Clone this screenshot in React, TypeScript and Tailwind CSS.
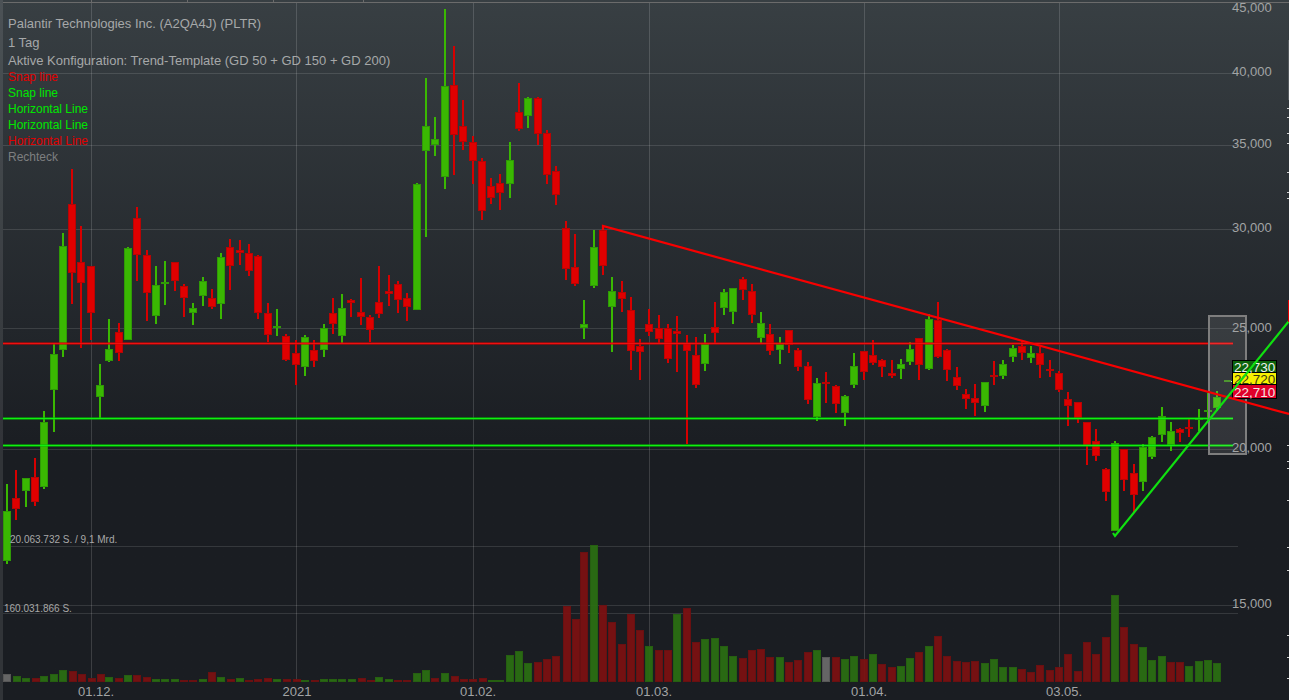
// [x, wickTop, bodyTop, bodyBottom, wickBottom, up]
type Candle = [number, number, number, number, number, number];

const candles: Candle[] = [
  [7, 484, 511, 561, 564, 1], [16, 470, 498, 509, 520, 0], [26, 478, 478, 491, 507, 1], [35, 458, 477, 502, 506, 0],
  [44, 411, 422, 487, 489, 1], [54, 344, 354, 390, 432, 1], [63, 233, 246, 350, 357, 1], [72, 169, 204, 273, 304, 0],
  [81, 226, 262, 283, 348, 0], [91, 266, 266, 313, 340, 0], [100, 364, 385, 397, 418, 1], [109, 319, 349, 361, 362, 1],
  [119, 323, 332, 353, 361, 0], [128, 247, 248, 340, 340, 1], [137, 207, 218, 255, 281, 0], [147, 250, 255, 293, 321, 0],
  [156, 266, 285, 316, 324, 1], [165, 261, 282, 284, 305, 1], [175, 262, 262, 281, 291, 0], [184, 284, 286, 298, 317, 0],
  [193, 303, 308, 313, 325, 1], [203, 277, 281, 296, 306, 1], [212, 289, 298, 307, 309, 0], [221, 253, 257, 304, 319, 1],
  [230, 239, 247, 266, 290, 0], [240, 240, 250, 253, 265, 0], [249, 244, 253, 271, 276, 0], [258, 255, 256, 313, 319, 0],
  [268, 303, 313, 335, 342, 0], [277, 309, 326, 328, 336, 1], [286, 334, 336, 360, 361, 0], [296, 340, 353, 365, 385, 0],
  [305, 335, 337, 367, 376, 1], [314, 340, 350, 361, 367, 0], [324, 324, 328, 350, 357, 1], [333, 298, 313, 324, 334, 0],
  [342, 294, 308, 336, 343, 1], [351, 299, 300, 303, 317, 0], [361, 278, 312, 317, 325, 0], [370, 315, 317, 330, 342, 0],
  [379, 266, 302, 314, 318, 0], [389, 275, 291, 294, 306, 0], [398, 281, 284, 300, 313, 0], [407, 293, 298, 307, 321, 0],
  [417, 183, 184, 310, 310, 1], [426, 78, 126, 151, 237, 1], [435, 117, 139, 145, 156, 1], [445, 9, 86, 177, 189, 1],
  [454, 46, 85, 135, 175, 0], [463, 100, 126, 142, 150, 0], [473, 136, 142, 161, 184, 0], [482, 158, 161, 211, 220, 0],
  [491, 178, 186, 198, 204, 0], [500, 174, 183, 193, 210, 0], [510, 142, 160, 184, 198, 1], [519, 83, 112, 129, 131, 0],
  [528, 97, 98, 116, 128, 1], [538, 97, 98, 134, 145, 0], [547, 130, 133, 175, 184, 0], [556, 166, 171, 195, 205, 0],
  [566, 221, 228, 269, 280, 0], [575, 234, 267, 284, 286, 0], [584, 300, 324, 328, 339, 1], [594, 230, 247, 286, 288, 1],
  [603, 225, 230, 266, 275, 0], [612, 277, 291, 307, 352, 1], [622, 281, 292, 299, 312, 0], [631, 297, 310, 351, 370, 0],
  [640, 339, 346, 352, 380, 0], [649, 309, 324, 332, 336, 0], [659, 315, 328, 339, 343, 0], [668, 324, 328, 359, 363, 0],
  [677, 316, 331, 334, 372, 0], [687, 335, 343, 351, 444, 0], [696, 337, 355, 385, 388, 0], [705, 334, 344, 364, 371, 1],
  [715, 302, 327, 333, 344, 0], [724, 289, 292, 308, 315, 1], [733, 288, 288, 312, 324, 1], [743, 277, 279, 290, 300, 0],
  [752, 284, 291, 315, 323, 0], [761, 312, 323, 338, 343, 1], [770, 324, 334, 351, 355, 0], [780, 337, 344, 350, 364, 1],
  [789, 330, 330, 345, 353, 0], [798, 348, 350, 367, 371, 0], [808, 362, 366, 400, 404, 0], [817, 378, 383, 417, 421, 1],
  [826, 372, 382, 384, 403, 0], [836, 385, 386, 404, 413, 0], [845, 395, 396, 413, 426, 1], [854, 353, 366, 385, 388, 1],
  [864, 351, 351, 372, 380, 0], [873, 340, 355, 363, 365, 0], [882, 359, 360, 367, 377, 0], [892, 360, 373, 376, 378, 0],
  [901, 359, 364, 369, 379, 1], [910, 342, 349, 362, 365, 1], [919, 338, 338, 365, 380, 0], [929, 314, 319, 369, 370, 1],
  [938, 302, 320, 357, 358, 0], [947, 349, 350, 370, 381, 0], [957, 367, 377, 386, 390, 0], [966, 389, 394, 399, 409, 0],
  [975, 384, 398, 403, 416, 0], [985, 382, 382, 406, 412, 1], [994, 361, 375, 377, 385, 0], [1003, 360, 364, 376, 379, 1],
  [1013, 345, 348, 357, 362, 1], [1022, 341, 346, 353, 360, 0], [1031, 346, 353, 358, 363, 1], [1040, 347, 353, 365, 378, 0],
  [1050, 360, 369, 371, 377, 0], [1059, 371, 373, 390, 392, 0], [1068, 392, 399, 406, 426, 0], [1078, 402, 402, 418, 423, 0],
  [1087, 422, 422, 446, 465, 0], [1096, 429, 441, 456, 461, 0], [1106, 468, 469, 492, 501, 0], [1115, 441, 443, 531, 531, 1],
  [1124, 449, 449, 480, 491, 0], [1134, 464, 473, 495, 512, 0], [1143, 444, 447, 482, 491, 1], [1152, 436, 437, 457, 459, 1],
  [1162, 407, 416, 435, 442, 1], [1171, 422, 431, 445, 451, 1], [1180, 428, 429, 433, 442, 0], [1189, 419, 427, 429, 437, 0],
  [1199, 409, 418, 420, 431, 1], [1208, 393, 410, 412, 420, 1], [1217, 391, 397, 408, 411, 1],
];

// [x, top, colour] - baseline is y=681
const volumes: [number, number, string][] = [
  [7, 674, "n"], [17, 676, "g"], [26, 678, "g"], [36, 678, "r"], [44, 676, "g"], [54, 674, "g"], [63, 670, "g"], [73, 671, "r"],
  [82, 674, "r"], [92, 678, "r"], [101, 674, "r"], [109, 677, "g"], [119, 678, "r"], [128, 675, "g"], [137, 675, "r"], [147, 677, "r"],
  [156, 679, "g"], [165, 679, "g"], [175, 679, "g"], [184, 680, "r"], [193, 680, "r"], [203, 679, "g"], [212, 672, "r"], [221, 677, "g"],
  [231, 679, "r"], [240, 678, "g"], [249, 680, "r"], [258, 679, "r"], [268, 678, "r"], [277, 679, "g"], [287, 679, "r"], [297, 679, "r"],
  [305, 680, "g"], [315, 680, "r"], [324, 679, "g"], [333, 679, "g"], [342, 679, "g"], [352, 679, "g"], [362, 678, "r"], [371, 680, "r"],
  [379, 677, "g"], [389, 679, "g"], [398, 680, "r"], [407, 680, "r"], [417, 673, "g"], [426, 670, "g"], [435, 678, "r"], [445, 673, "g"],
  [455, 676, "r"], [464, 679, "r"], [473, 679, "r"], [483, 678, "r"], [492, 680, "g"], [500, 680, "g"], [510, 655, "g"], [519, 651, "g"],
  [528, 663, "g"], [538, 662, "r"], [547, 659, "r"], [556, 656, "r"], [567, 606, "r"], [576, 619, "r"], [584, 552, "r"], [594, 545, "g"],
  [603, 605, "r"], [612, 622, "r"], [622, 644, "r"], [631, 614, "r"], [640, 630, "r"], [649, 646, "g"], [659, 650, "r"], [668, 650, "r"],
  [677, 614, "g"], [687, 608, "r"], [696, 642, "r"], [705, 639, "g"], [715, 638, "g"], [724, 646, "g"], [733, 656, "g"], [743, 658, "r"],
  [752, 650, "r"], [761, 649, "r"], [770, 657, "r"], [780, 657, "g"], [789, 662, "r"], [798, 660, "r"], [808, 652, "r"], [817, 650, "g"],
  [826, 657, "n"], [836, 657, "r"], [845, 659, "g"], [854, 656, "g"], [864, 659, "r"], [873, 654, "g"], [882, 664, "r"], [892, 667, "r"],
  [901, 666, "g"], [910, 658, "g"], [919, 652, "r"], [929, 646, "g"], [938, 636, "r"], [947, 656, "r"], [957, 661, "r"], [966, 662, "r"],
  [975, 661, "r"], [985, 663, "g"], [994, 659, "g"], [1003, 667, "g"], [1013, 667, "g"], [1022, 669, "r"], [1031, 672, "r"], [1040, 665, "r"],
  [1050, 670, "r"], [1059, 667, "r"], [1068, 654, "r"], [1078, 671, "r"], [1087, 642, "r"], [1096, 654, "r"], [1106, 637, "r"], [1115, 595, "g"],
  [1124, 627, "r"], [1134, 644, "r"], [1143, 647, "g"], [1152, 660, "g"], [1162, 656, "g"], [1171, 662, "r"], [1180, 662, "r"], [1189, 666, "g"],
  [1199, 661, "g"], [1208, 660, "g"], [1217, 663, "g"],
];

const gridY = [73, 145, 229, 328, 449, 546, 605, 613];
const gridX = [91, 296, 473, 649, 864, 1059];
const priceLabels: [string, number][] = [
  ["45,000", 7], ["40,000", 71], ["35,000", 143], ["30,000", 227], ["25,000", 327], ["20,000", 447], ["15,000", 603],
];
const dateLabels: [string, number][] = [
  ["01.12.", 96], ["2021", 297], ["01.02.", 478], ["01.03.", 654], ["01.04.", 869], ["03.05.", 1064],
];
const rightTicks = [108, 117, 133, 143, 172, 192, 198, 445, 461, 468, 500, 547, 570, 635, 657, 678];

const volFill: Record<string, string> = { g: "#2b6f12", r: "#7c1111", n: "#6b6b6b" };
const volStroke: Record<string, string> = { g: "#276510", r: "#6f1010", n: "#5c5c5c" };

const legend = [
  { label: "Palantir Technologies Inc. (A2QA4J) (PLTR)", cls: "h-[19px] text-[13px] text-[#a6a8a9]" },
  { label: "1 Tag", cls: "h-[19px] text-[13px] text-[#a6a8a9]" },
  { label: "Aktive Konfiguration: Trend-Template (GD 50 + GD 150 + GD 200)", cls: "h-[17px] text-[13px] text-[#a6a8a9]" },
  { label: "Snap line", cls: "h-4 text-xs text-[#e00000]" },
  { label: "Snap line", cls: "h-4 text-xs text-[#00e600]" },
  { label: "Horizontal Line", cls: "h-4 text-xs text-[#00e600]" },
  { label: "Horizontal Line", cls: "h-4 text-xs text-[#00e600]" },
  { label: "Horizontal Line", cls: "h-4 text-xs text-[#e00000]" },
  { label: "Rechteck", cls: "h-4 text-xs text-[#7d7f80]" },
];

function CandleMark({ c }: { c: Candle }) {
  const [x, wickTop, bodyTop, bodyBottom, wickBottom, up] = c;
  const fill = up ? "#3ab802" : "#e00000";
  const edge = up ? "#2f9a06" : "#b80404";
  return (
    <g shapeRendering="crispEdges">
      <rect x={x - 1} y={wickTop} width={2} height={wickBottom - wickTop} fill={up ? "#3ab802" : "#d60000"} />
      <rect x={x - 3.5} y={bodyTop + 0.5} width={7} height={Math.max(bodyBottom - bodyTop - 1, 1)} fill={fill} stroke={edge} />
    </g>
  );
}

export default function App() {
  return (
    <div className="relative w-[1289px] h-[700px] overflow-hidden bg-linear-to-b from-[#383f43] to-[#1a1d22] to-65% font-['Liberation_Sans',Arial,sans-serif]">
      <svg width={1289} height={700} className="absolute inset-0">
        <rect x={0} y={0} width={3} height={700} fill="#ffffff" opacity={0.1} />
        <rect x={3} y={2} width={1286} height={1} fill="#6b6b6b" />
        {[91, 187, 273, 363].map((x) => (
          <rect key={x} x={x} y={0} width={1} height={2} fill="#6b6b6b" />
        ))}

        {gridY.map((y) => (
          <rect key={y} x={3} y={y} width={1235} height={1} fill="#ffffff" opacity={0.12} />
        ))}
        {gridX.map((x) => (
          <rect key={x} x={x} y={3} width={1} height={678} fill="#ffffff" opacity={0.15} />
        ))}

        {volumes.map(([x, top, c]) => (
          <rect key={x} x={x - 3.5} y={top + 0.5} width={7} height={681 - top - 0.5} fill={volFill[c]} stroke={volStroke[c]} opacity={0.93} shapeRendering="crispEdges" />
        ))}

        {candles.map((c) => (
          <CandleMark key={c[0]} c={c} />
        ))}
        <rect x={1224} y={380} width={7} height={2} fill="#3a8a1a" />
        <rect x={1231} y={381} width={3} height={1} fill="#d8d8d8" />

        {/* drawn levels and trend lines */}
        <g>
          <line x1={3} y1={343.5} x2={1233} y2={343.5} stroke="#d00000" strokeWidth={3} opacity={0.55} />
          <line x1={3} y1={343.5} x2={1233} y2={343.5} stroke="#f01010" strokeWidth={1.2} />
          <line x1={3} y1={418.5} x2={1233} y2={418.5} stroke="#00c800" strokeWidth={3} opacity={0.55} />
          <line x1={3} y1={418.5} x2={1233} y2={418.5} stroke="#10f010" strokeWidth={1.2} />
          <line x1={3} y1={445.5} x2={1233} y2={445.5} stroke="#00c800" strokeWidth={3} opacity={0.55} />
          <line x1={3} y1={445.5} x2={1233} y2={445.5} stroke="#10f010" strokeWidth={1.2} />
        </g>

        <rect x={1209} y={316} width={37} height={138} fill="#ffffff" fillOpacity={0.1} stroke="#7e7e7e" strokeWidth={2} />

        <g shapeRendering="crispEdges">
          <rect x={1232.5} y={360.5} width={44} height={12} fill="#0d640d" stroke="#000000" />
          <rect x={1232.5} y={372.5} width={44} height={12} fill="#f6f000" stroke="#000000" />
          <rect x={1232.5} y={384.5} width={44} height={14} fill="#e0002a" stroke="#000000" />
        </g>
        <text x={1234} y={372} className="text-[13.5px] fill-[#f0f0f0]">22,730</text>
        <text x={1234} y={384} className="text-[13.5px] fill-[#3a3a10]">22,720</text>
        <text x={1234} y={397} className="text-[13.5px] fill-[#f4e4e4]">22,710</text>

        <path d="M603 230 L603 226 L1289 414" fill="none" stroke="#f80000" strokeWidth={2.2} />
        <path d="M1113 533 L1115 536 L1289 321" fill="none" stroke="#10e010" strokeWidth={2.2} />

        {priceLabels.map(([t, y]) => (
          <text key={t} x={1232} y={y} dominantBaseline="central" className="text-[13px] fill-[#a2a4a5]">{t}</text>
        ))}
        {dateLabels.map(([t, x]) => (
          <text key={t} x={x} y={691} textAnchor="middle" dominantBaseline="central" className="text-[13px] fill-[#a2a4a5]">{t}</text>
        ))}
        <text x={10} y={539} dominantBaseline="central" className="text-[10px] fill-[#a8a8a8]">20.063.732 S. / 9,1 Mrd.</text>
        <text x={4} y={608} dominantBaseline="central" className="text-[10px] fill-[#a8a8a8]">160.031.866 S.</text>

        <rect x={1288} y={40} width={1} height={60} fill="#555a5e" />
        <rect x={1288} y={300} width={1} height={22} fill="#e00000" />
        {rightTicks.map((y) => (
          <rect key={y} x={1287} y={y} width={2} height={1} fill="#d0d0d0" />
        ))}
      </svg>

      <div className="absolute left-2 top-[14px] flex flex-col">
        {legend.map((row, i) => (
          <div key={i} className={`flex items-center whitespace-nowrap ${row.cls}`}>
            {row.label}
          </div>
        ))}
      </div>
    </div>
  );
}
